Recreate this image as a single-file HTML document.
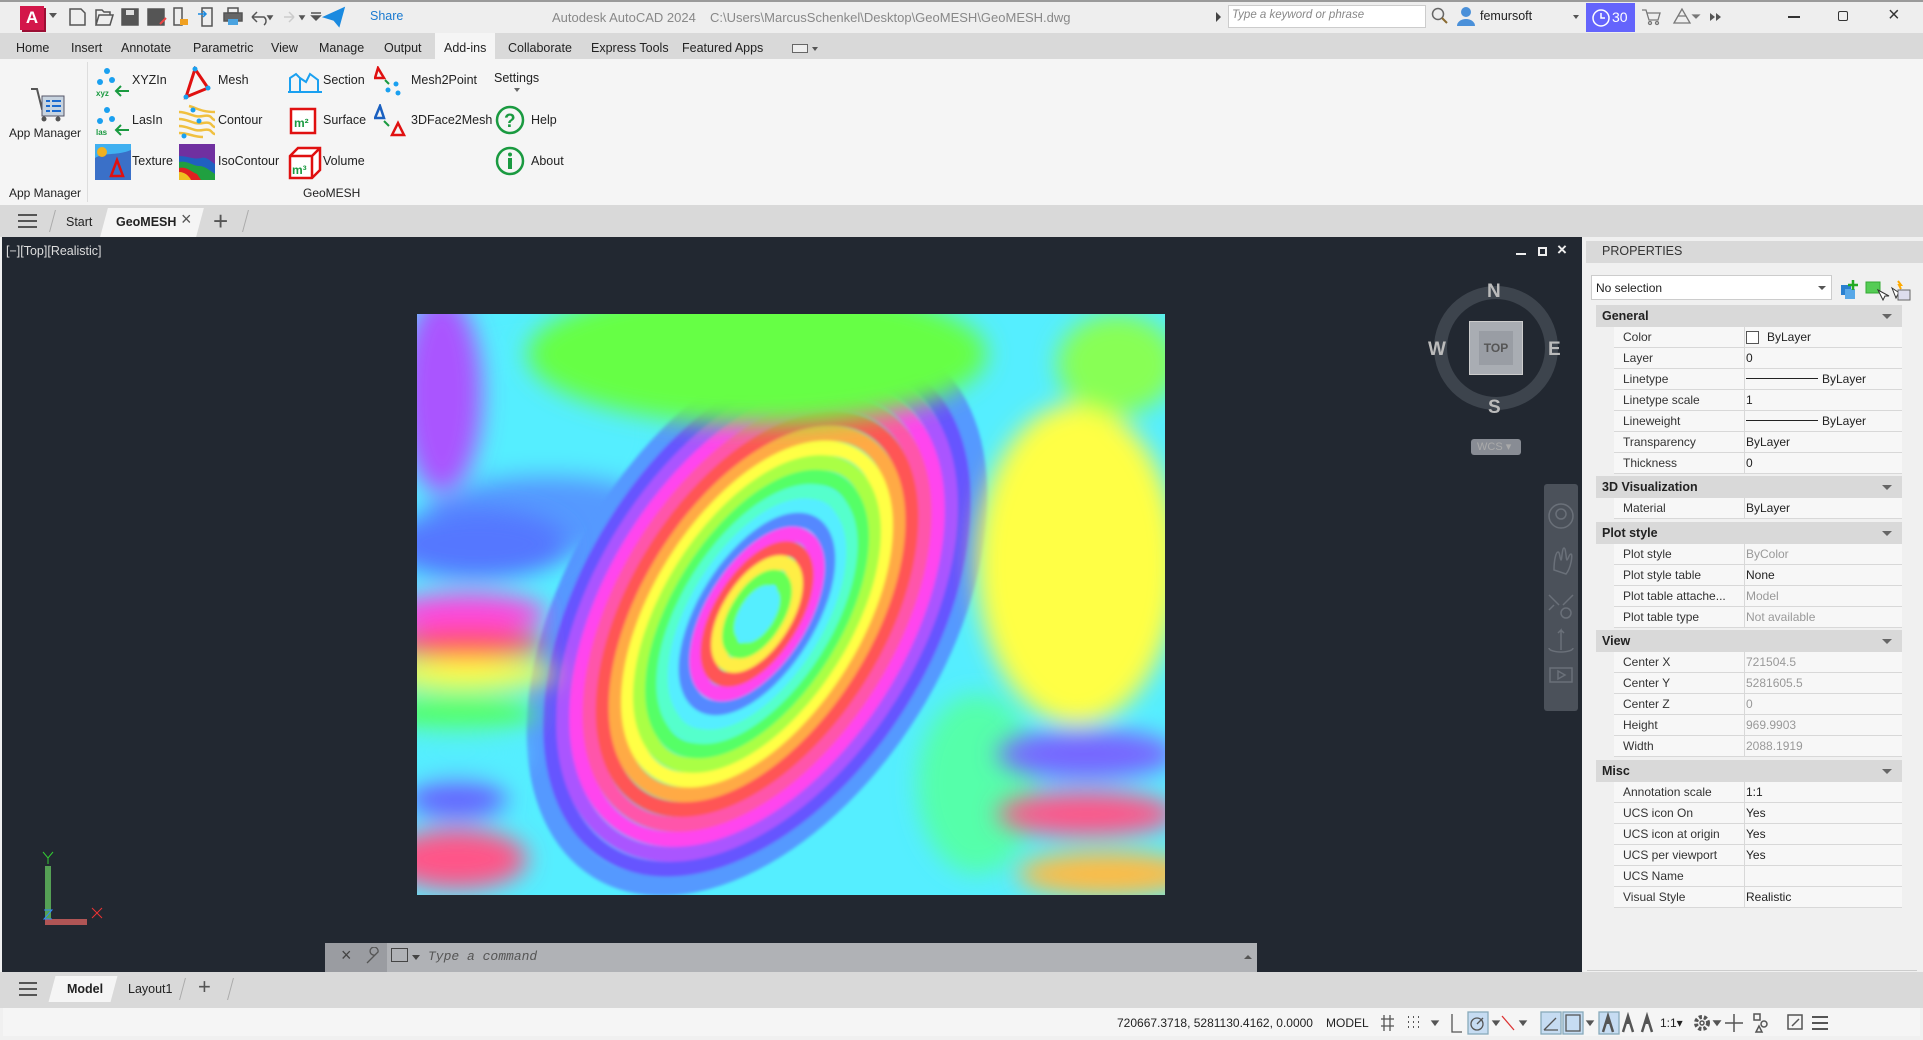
<!DOCTYPE html>
<html><head><meta charset="utf-8"><style>
*{margin:0;padding:0;box-sizing:border-box}
html,body{overflow:hidden}
body{width:1923px;height:1040px;background:#f0f0f0;font-family:"Liberation Sans",Arial,sans-serif;font-size:12px;color:#222;position:relative}
.a{position:absolute;white-space:nowrap}
.tab{position:absolute;top:41px;font-size:12.5px;color:#222}
.rt{position:absolute;font-size:12.5px;color:#222}
.row{position:absolute;left:1614px;width:288px;height:21px;border-bottom:1px solid #d8d8d8;background:#f7f7f7}
.row .l{position:absolute;left:9px;top:3px;color:#333}
.row .v{position:absolute;left:132px;top:3px;color:#222}
.row .sep{position:absolute;left:130px;top:0;width:1px;height:21px;background:#d8d8d8}
.hd{position:absolute;left:1596px;width:306px;height:22px;background:#d9d9d9;font-weight:bold;font-size:12.5px;padding:4px 0 0 6px}
.hd:after{content:"";position:absolute;right:10px;top:9px;border:5px solid transparent;border-top:5px solid #666}
.gr{color:#999!important}
.ico{position:absolute}
</style></head><body>
<div class="a" style="left:0;top:0;width:1923px;height:2px;background:#9a9a9a"></div>
<div class="a" style="left:0;top:2px;width:1923px;height:31px;background:#eeeeee"></div>
<div class="a" style="left:20px;top:6px;width:24px;height:24px;background:#d3174a;color:#fff;font-weight:bold;font-size:17px;text-align:center;line-height:24px;box-shadow:2px 2px 0 #9b0e33">A</div>
<div class="a" style="left:49px;top:13px;border:4px solid transparent;border-top:5px solid #555"></div>
<svg class="a" style="left:68px;top:6px" width="300" height="22" viewBox="0 0 300 22" fill="none" stroke="#555" stroke-width="1.5">
<path d="M2 3h11l4 4v12H2z"/><path d="M28 19l3-10h14l-3 10H28zM28 19V4h6l2 2h6v3"/>
<rect x="54" y="3" width="16" height="16" fill="#555"/><rect x="58" y="4" width="8" height="5" fill="#ddd" stroke="none"/>
<rect x="80" y="3" width="16" height="16" fill="#555"/><path d="M92 18l6-6" stroke="#e44" stroke-width="2"/>
<path d="M106 2h8v17h-8z"/><rect x="112" y="13" width="8" height="6" fill="#f0a020" stroke="none"/>
<path d="M134 2h10v18h-10z"/><path d="M130 8h8M135 5l3 3-3 3" stroke="#1a8ae0"/>
<rect x="156" y="7" width="18" height="8" fill="#666"/><rect x="160" y="2" width="10" height="5"/><rect x="160" y="13" width="10" height="6" fill="#4aa3e0" stroke="none"/>
<path d="M184 11h12a5 5 0 0 1 0 8M184 11l5-5M184 11l5 5"/><path d="M200 10l4 0 -2 3z" fill="#555"/>
<path d="M226 11h-10M226 11l-5-5M226 11l-5 5" stroke="#ccc"/><path d="M232 10l4 0-2 3z" fill="#555"/>
<path d="M243 7h10M244 10l4 4 4-4z" fill="#555"/>
<path d="M280 11l20-9-5 18-5-6z" fill="#1a8ae0" stroke="#1a8ae0" transform="translate(-24 0)"/></svg>
<div class="a" style="left:370px;top:9px;color:#1a7ad0;font-size:12.5px">Share</div>
<div class="a" style="left:552px;top:10px;color:#888;font-size:13px">Autodesk AutoCAD 2024</div>
<div class="a" style="left:710px;top:10px;color:#888;font-size:13px">C:\Users\MarcusSchenkel\Desktop\GeoMESH\GeoMESH.dwg</div>
<div class="a" style="left:1216px;top:12px;border:5px solid transparent;border-left:5px solid #444"></div>
<div class="a" style="left:1228px;top:5px;width:198px;height:23px;background:#fff;border:1px solid #ccc;color:#888;font-style:italic;padding:3px 3px;font-size:11.5px">Type a keyword or phrase</div>
<svg class="a" style="left:1431px;top:7px" width="18" height="18"><circle cx="7" cy="7" r="5.5" fill="none" stroke="#666" stroke-width="1.5"/><path d="M11 11l5 5" stroke="#8a6a30" stroke-width="2"/></svg>
<svg class="a" style="left:1456px;top:6px" width="20" height="20"><circle cx="10" cy="6" r="5" fill="#4a90d9"/><path d="M1 20a9 7 0 0 1 18 0z" fill="#4a90d9"/></svg>
<div class="a" style="left:1480px;top:9px;font-size:12.5px">femursoft</div>
<div class="a" style="left:1573px;top:15px;border:3px solid transparent;border-top:4px solid #555"></div>
<div class="a" style="left:1586px;top:3px;width:49px;height:29px;background:#6464fc;color:#fff;font-size:14px;padding:6px 0 0 26px">30</div>
<svg class="a" style="left:1591px;top:8px" width="20" height="20"><circle cx="10" cy="10" r="8" fill="none" stroke="#fff" stroke-width="1.5"/><path d="M10 5v5h4" stroke="#fff" fill="none" stroke-width="1.5"/></svg>
<svg class="a" style="left:1640px;top:6px" width="90" height="22" fill="none" stroke="#777" stroke-width="1.3"><path d="M2 4h4l3 10h9l2-7H7"/><circle cx="10" cy="17" r="1.5"/><circle cx="17" cy="17" r="1.5"/><path d="M42 3l-8 14h16z M38 10h8"/><path d="M53 9h6l-3 3z" fill="#777"/><path d="M70 7l5 4-5 4zM76 7l5 4-5 4z" fill="#555" stroke="none"/></svg>
<div class="a" style="left:1788px;top:16px;width:12px;height:1.5px;background:#333"></div>
<div class="a" style="left:1838px;top:11px;width:10px;height:10px;border:1.5px solid #333;border-radius:2px"></div>
<div class="a" style="left:1888px;top:4px;font-size:20px;color:#333">×</div>

<div class="a" style="left:0;top:33px;width:1923px;height:26px;background:#d9d9d9"></div>
<div class="a" style="left:435px;top:33px;width:60px;height:26px;background:#f5f5f5"></div>
<div class="tab" style="left:16px">Home</div><div class="tab" style="left:71px">Insert</div><div class="tab" style="left:121px">Annotate</div><div class="tab" style="left:193px">Parametric</div><div class="tab" style="left:271px">View</div><div class="tab" style="left:319px">Manage</div><div class="tab" style="left:384px">Output</div><div class="tab" style="left:444px">Add-ins</div><div class="tab" style="left:508px">Collaborate</div><div class="tab" style="left:591px">Express Tools</div><div class="tab" style="left:682px">Featured Apps</div>
<div class="a" style="left:792px;top:44px;width:16px;height:9px;border:1px solid #666;background:#eee"></div><div class="a" style="left:812px;top:47px;border:3px solid transparent;border-top:4px solid #555"></div>

<div class="a" style="left:0;top:59px;width:1923px;height:146px;background:#f5f5f5"></div>
<div class="a" style="left:87px;top:62px;width:1px;height:140px;background:#ddd"></div>
<svg class="ico" style="left:28px;top:86px" width="40" height="38"><path d="M3 3h6l5 20h18" stroke="#555" stroke-width="2" fill="none"/><rect x="14" y="10" width="22" height="20" fill="#c8d4e0" stroke="#556"/><path d="M18 15h4M24 15h9M18 20h4M24 20h9M18 25h4M24 25h9" stroke="#1a6ad0" stroke-width="2"/><circle cx="16" cy="33" r="2.5" fill="#555"/><circle cx="30" cy="33" r="2.5" fill="#555"/></svg>
<div class="rt" style="left:9px;top:126px;font-size:12px">App Manager</div>
<div class="rt" style="left:9px;top:186px;font-size:12px">App Manager</div>
<svg class="ico" style="left:95px;top:67px" width="36" height="32"><circle cx="12" cy="4" r="3" fill="#1aa0f0"/><circle cx="5" cy="15" r="3" fill="#1aa0f0"/><circle cx="17" cy="13" r="3" fill="#1aa0f0"/><text x="1" y="29" font-size="8" fill="#1a9a40" font-weight="bold" font-family="Liberation Sans">xyz</text><path d="M34 24H21M26 19l-5 5 5 5" stroke="#1a9a40" stroke-width="2" fill="none"/></svg>
<div class="rt" style="left:132px;top:73px">XYZIn</div>
<svg class="ico" style="left:181px;top:66px" width="34" height="34"><path d="M14 3L5 31l22-9z" fill="none" stroke="#e01010" stroke-width="3"/><circle cx="14" cy="3" r="2.5" fill="#1aa0f0"/><circle cx="5" cy="31" r="2.5" fill="#1aa0f0"/><circle cx="27" cy="22" r="2.5" fill="#1aa0f0"/></svg>
<div class="rt" style="left:218px;top:73px">Mesh</div>
<svg class="ico" style="left:286px;top:70px" width="36" height="24"><path d="M2 22h34M4 22V8l6-4 4 4v14M14 8l6 4 4-8 8 6v12" stroke="#1aa0f0" stroke-width="2" fill="none"/></svg>
<div class="rt" style="left:323px;top:73px">Section</div>
<svg class="ico" style="left:374px;top:66px" width="34" height="34"><path d="M4 2L1 12h9z" fill="none" stroke="#e01010" stroke-width="2.5"/><path d="M11 14l4 4" stroke="#1a9a40" stroke-width="2"/><circle cx="14" cy="24" r="2.5" fill="#1aa0f0"/><circle cx="22" cy="18" r="2.5" fill="#1aa0f0"/><circle cx="24" cy="27" r="2.5" fill="#1aa0f0"/></svg>
<div class="rt" style="left:411px;top:73px">Mesh2Point</div>
<div class="rt" style="left:494px;top:71px">Settings</div><div class="a" style="left:514px;top:88px;border:3px solid transparent;border-top:4px solid #666"></div>
<svg class="ico" style="left:95px;top:106px" width="36" height="32"><circle cx="12" cy="4" r="3" fill="#1aa0f0"/><circle cx="5" cy="15" r="3" fill="#1aa0f0"/><circle cx="17" cy="13" r="3" fill="#1aa0f0"/><text x="1" y="29" font-size="8" fill="#1a9a40" font-weight="bold" font-family="Liberation Sans">las</text><path d="M34 24H21M26 19l-5 5 5 5" stroke="#1a9a40" stroke-width="2" fill="none"/></svg>
<div class="rt" style="left:132px;top:113px">LasIn</div>
<svg class="ico" style="left:179px;top:104px" width="36" height="36"><path d="M0 8c10 0 14 6 24 4s8 4 12 4M0 15c10 0 14 6 24 4s8 4 12 4M0 22c10 0 14 6 24 4s8 4 12 4M0 29c10 0 14 4 24 4M10 2c8 2 12 6 26 6" stroke="#f0c040" stroke-width="2.5" fill="none"/><circle cx="14" cy="6" r="2.5" fill="#1aa0f0"/><circle cx="20" cy="17" r="2.5" fill="#1aa0f0"/><circle cx="5" cy="32" r="2.5" fill="#1aa0f0"/></svg>
<div class="rt" style="left:218px;top:113px">Contour</div>
<svg class="ico" style="left:289px;top:107px" width="28" height="28"><rect x="2" y="2" width="24" height="24" fill="#fff" stroke="#e01010" stroke-width="2.5"/><text x="5" y="20" font-size="12" font-weight="bold" fill="#1a9a40" font-family="Liberation Sans">m²</text></svg>
<div class="rt" style="left:323px;top:113px">Surface</div>
<svg class="ico" style="left:374px;top:104px" width="34" height="34"><path d="M6 2L1 14h9z" fill="none" stroke="#1a60c0" stroke-width="2.5"/><path d="M10 17l5 5" stroke="#1a9a40" stroke-width="2"/><path d="M24 19L18 31h12z" fill="none" stroke="#e01010" stroke-width="2.5"/></svg>
<div class="rt" style="left:411px;top:113px">3DFace2Mesh</div>
<svg class="ico" style="left:495px;top:105px" width="30" height="30"><circle cx="15" cy="15" r="13" fill="none" stroke="#1a9a40" stroke-width="2.5"/><text x="9" y="22" font-size="19" font-weight="bold" fill="#1a9a40" font-family="Liberation Sans">?</text></svg>
<div class="rt" style="left:531px;top:113px">Help</div>
<svg class="ico" style="left:95px;top:144px" width="36" height="36"><rect width="36" height="36" fill="#3a70c8"/><path d="M0 14c10-6 22-2 36-8V0H0z" fill="#40b0f0"/><circle cx="7" cy="8" r="5" fill="#f0b020"/><path d="M22 16l-6 16h12z" fill="none" stroke="#e01010" stroke-width="2.5"/></svg>
<div class="rt" style="left:132px;top:154px">Texture</div>
<svg class="ico" style="left:179px;top:144px" width="36" height="36"><rect width="36" height="36" fill="#7030a0"/><path d="M0 12c8 0 16 4 22 2s10 4 14 6v16H0z" fill="#2060c0"/><path d="M0 18c8-2 14 4 20 4s10 4 16 8v6H0z" fill="#20a040"/><path d="M0 24c8-2 12 4 18 6l4 6H0z" fill="#e02020"/><path d="M0 28c6 0 10 4 12 8H0z" fill="#f0c020"/></svg>
<div class="rt" style="left:218px;top:154px">IsoContour</div>
<svg class="ico" style="left:288px;top:144px" width="34" height="36"><path d="M2 12l8-8h22v22l-8 8H2z M2 12h22v22 M24 12l8-8" fill="#fff" stroke="#e01010" stroke-width="2.5"/><text x="4" y="30" font-size="12" font-weight="bold" fill="#1a9a40" font-family="Liberation Sans">m³</text></svg>
<div class="rt" style="left:323px;top:154px">Volume</div>
<svg class="ico" style="left:495px;top:146px" width="30" height="30"><circle cx="15" cy="15" r="13" fill="none" stroke="#1a9a40" stroke-width="2.5"/><circle cx="15" cy="8.5" r="2" fill="#1a9a40"/><rect x="13" y="12" width="4" height="11" fill="#1a9a40"/></svg>
<div class="rt" style="left:531px;top:154px">About</div>
<div class="rt" style="left:303px;top:186px;font-size:12px">GeoMESH</div>

<div class="a" style="left:0;top:205px;width:1923px;height:32px;background:#d9d9d9"></div>
<div class="a" style="left:18px;top:214px;width:19px;height:2px;background:#555;box-shadow:0 6px 0 #555,0 12px 0 #555"></div>
<div class="a" style="left:52px;top:210px;width:1px;height:22px;background:#aaa;transform:skewX(-15deg)"></div>
<div class="rt" style="left:66px;top:215px">Start</div>
<div class="a" style="left:104px;top:208px;width:96px;height:29px;background:#f5f5f5;transform:skewX(-15deg)"></div>
<div class="rt" style="left:116px;top:215px;font-weight:bold">GeoMESH</div>
<div class="a" style="left:181px;top:209px;font-size:18px;color:#555">×</div>
<div class="a" style="left:213px;top:206px;font-size:26px;color:#555;font-weight:300">+</div>
<div class="a" style="left:245px;top:210px;width:1px;height:22px;background:#aaa;transform:skewX(-15deg)"></div>

<div class="a" style="left:2px;top:237px;width:1580px;height:735px;background:#222831"></div>
<div class="a" style="left:6px;top:244px;color:#ddd;font-size:12.5px">[−][Top][Realistic]</div>
<div class="a" style="left:1516px;top:253px;width:10px;height:2px;background:#eee"></div>
<div class="a" style="left:1538px;top:247px;width:9px;height:9px;border:2px solid #eee"></div>
<div class="a" style="left:1557px;top:240px;font-size:17px;color:#eee;font-weight:bold">×</div>
<svg class="a" style="left:417px;top:314px;overflow:hidden" width="748" height="581" viewBox="0 0 748 581">
<defs><filter id="b" x="-20%" y="-20%" width="140%" height="140%"><feGaussianBlur stdDeviation="12"/></filter>
<filter id="c"><feGaussianBlur stdDeviation="1.5"/></filter></defs>
<rect width="748" height="581" fill="#55eeff"/>
<g filter="url(#b)">
<ellipse cx="120" cy="120" rx="120" ry="90" fill="#55eeff"/>
<ellipse cx="130" cy="200" rx="120" ry="40" fill="#5599ff"/>
<ellipse cx="560" cy="470" rx="60" ry="90" fill="#55ffaa"/>
</g>
<g transform="translate(340 300) rotate(-58)" fill="none" stroke-width="15" filter="url(#c)">
<ellipse rx="300" ry="180" stroke="#5599ff" stroke-width="20"/>
<ellipse rx="282" ry="168" stroke="#6655ff"/>
<ellipse rx="266" ry="156" stroke="#aa55ff"/>
<ellipse rx="250" ry="144" stroke="#ff44ee"/>
<ellipse rx="234" ry="132" stroke="#ff55aa"/>
<ellipse rx="218" ry="120" stroke="#ff5555"/>
<ellipse rx="202" ry="108" stroke="#ffaa44"/>
<ellipse rx="186" ry="97" stroke="#ffff44"/>
<ellipse rx="170" ry="87" stroke="#aaff44"/>
<ellipse rx="154" ry="77" stroke="#55ff66"/>
<ellipse rx="138" ry="68" stroke="#55ffcc"/>
<ellipse rx="122" ry="59" stroke="#55eeff"/>
<ellipse rx="106" ry="51" stroke="#5588ff"/>
<ellipse rx="90" ry="43" stroke="#ff44ee"/>
<ellipse rx="74" ry="35" stroke="#ff5555"/>
<ellipse rx="58" ry="27" stroke="#ffee44"/>
<ellipse rx="42" ry="19" stroke="#66ff55"/>
<ellipse rx="24" ry="10" stroke="#55eeff" fill="#55eeff"/>
</g>
<g filter="url(#b)">
<ellipse cx="340" cy="40" rx="230" ry="70" fill="#66ff44"/>
<ellipse cx="660" cy="250" rx="100" ry="160" fill="#ffff44"/>
<ellipse cx="700" cy="50" rx="60" ry="50" fill="#88ff55"/>
<ellipse cx="25" cy="80" rx="40" ry="100" fill="#aa55ff"/>
<ellipse cx="60" cy="230" rx="90" ry="35" fill="#5577ff"/>
<ellipse cx="50" cy="300" rx="80" ry="20" fill="#ff44dd"/>
<ellipse cx="50" cy="330" rx="80" ry="15" fill="#ff5555"/>
<ellipse cx="50" cy="360" rx="90" ry="15" fill="#ffff44"/>
<ellipse cx="40" cy="400" rx="80" ry="18" fill="#55ff66"/>
<ellipse cx="40" cy="440" rx="70" ry="20" fill="#55eeff"/>
<ellipse cx="40" cy="485" rx="50" ry="20" fill="#6666ff"/>
<ellipse cx="40" cy="545" rx="70" ry="30" fill="#ff5588"/>
<ellipse cx="670" cy="440" rx="90" ry="25" fill="#7766ff"/>
<ellipse cx="670" cy="500" rx="90" ry="22" fill="#ff5588"/>
<ellipse cx="690" cy="560" rx="90" ry="22" fill="#ffbb44"/>
</g></svg>
<div class="a" style="left:1434px;top:286px;width:124px;height:124px;border-radius:50%;border:13px solid #3d444d"></div>
<div class="a" style="left:1469px;top:321px;width:54px;height:54px;background:#a9adb3;border:1px solid #ccc"></div>
<div class="a" style="left:1479px;top:331px;width:34px;height:34px;background:#999da4;color:#555;font-size:12px;font-weight:bold;text-align:center;line-height:34px">TOP</div>
<div class="a" style="left:1487px;top:281px;color:#bbb;font-weight:bold;font-size:19px">N</div>
<div class="a" style="left:1488px;top:397px;color:#bbb;font-weight:bold;font-size:19px">S</div>
<div class="a" style="left:1428px;top:339px;color:#bbb;font-weight:bold;font-size:19px">W</div>
<div class="a" style="left:1548px;top:339px;color:#bbb;font-weight:bold;font-size:19px">E</div>
<div class="a" style="left:1471px;top:439px;width:50px;height:16px;background:#888c94;border-radius:3px;color:#aaa;font-size:11px;padding:1px 0 0 6px">WCS ▾</div>
<div class="a" style="left:1544px;top:484px;width:34px;height:227px;background:#4b515a;border-radius:3px"></div>
<svg class="a" style="left:1546px;top:500px" width="30" height="200" fill="none" stroke="#6a7079" stroke-width="1.5"><circle cx="15" cy="16" r="12"/><circle cx="15" cy="14" r="5"/><path d="M8 70c0-10 2-18 4-18s2 8 3 8 1-12 3-12 2 12 3 12 2-6 4-6 0 14-5 20z"/><path d="M3 95l10 10M27 95l-10 10M3 110l5-5"/><circle cx="20" cy="113" r="5"/><path d="M15 150v-20l-3 3M15 130l3 3M3 148a12 4 0 0 0 24 0"/><rect x="4" y="168" width="22" height="14"/><path d="M12 171l7 4-7 4z"/></svg>
<svg class="a" style="left:40px;top:848px" width="80" height="80"><path d="M3 4l5 6 5-6M8 10v6" stroke="#3c3" fill="none"/><rect x="5" y="18" width="6" height="53" fill="#55a055"/><rect x="5" y="71" width="42" height="6" fill="#b05555"/><path d="M52 60l10 10M62 60l-10 10" stroke="#e33"/><path d="M4 62h8l-8 9h8" stroke="#3388ff" fill="none"/></svg>
<div class="a" style="left:325px;top:943px;width:932px;height:29px;background:#b0b2b6"></div>
<div class="a" style="left:325px;top:943px;width:62px;height:29px;background:#9a9ca1"></div>
<div class="a" style="left:341px;top:945px;font-size:18px;color:#444">×</div>
<svg class="a" style="left:364px;top:947px" width="18" height="18"><path d="M3 16l8-8a4 4 0 1 1 3-3l-8 8z" fill="none" stroke="#555" stroke-width="1.3"/></svg>
<div class="a" style="left:391px;top:948px;width:17px;height:14px;border:1.5px solid #444"></div>
<div class="a" style="left:412px;top:955px;border:4px solid transparent;border-top:5px solid #444"></div>
<div class="a" style="left:428px;top:949px;font-family:'Liberation Mono',monospace;font-style:italic;color:#555;font-size:13px">Type a command</div>
<div class="a" style="left:1244px;top:951px;border:4px solid transparent;border-bottom:4px solid #555"></div>

<div class="a" style="left:1582px;top:237px;width:341px;height:735px;background:#f0f0f0"></div>
<div class="a" style="left:1586px;top:241px;width:337px;height:22px;background:#d9d9d9"></div>
<div class="a" style="left:1602px;top:244px;font-size:12.5px;color:#333">PROPERTIES</div>
<div class="a" style="left:1591px;top:275px;width:241px;height:25px;background:#fff;border:1px solid #ccc;padding:5px 4px;font-size:12px">No selection</div>
<div class="a" style="left:1818px;top:286px;border:4px solid transparent;border-top:4px solid #555"></div>
<svg class="a" style="left:1840px;top:278px" width="74" height="24"><rect x="1" y="7" width="10" height="10" fill="#2a80d0"/><rect x="5" y="11" width="10" height="10" fill="#58a8e8"/><path d="M13 2v10M8 7h10" stroke="#2a2" stroke-width="2.5"/><rect x="26" y="4" width="14" height="11" fill="#5c5" stroke="#3a3"/><path d="M38 12l5 10 2-4 4 0z" fill="#fff" stroke="#333"/><path d="M52 10l4 10 2-4 3 0z" fill="#fff" stroke="#333"/><rect x="58" y="12" width="12" height="10" fill="#dde" stroke="#666"/><path d="M58 3l3 4h-2l2 4" stroke="#fa0" fill="none" stroke-width="2"/></svg>

<div class="hd" style="top:305px">General</div>
<div class="row" style="top:327px"><div class="l">Color</div><div class="sep"></div><div class="v"><span style="display:inline-block;width:13px;height:13px;border:1px solid #555;background:#fff;vertical-align:-3px;margin-right:8px"></span>ByLayer</div></div>
<div class="row" style="top:348px"><div class="l">Layer</div><div class="sep"></div><div class="v">0</div></div>
<div class="row" style="top:369px"><div class="l">Linetype</div><div class="sep"></div><div class="v"><span style="display:inline-block;width:72px;height:1px;background:#222;vertical-align:4px;margin-right:4px"></span>ByLayer</div></div>
<div class="row" style="top:390px"><div class="l">Linetype scale</div><div class="sep"></div><div class="v">1</div></div>
<div class="row" style="top:411px"><div class="l">Lineweight</div><div class="sep"></div><div class="v"><span style="display:inline-block;width:72px;height:1px;background:#222;vertical-align:4px;margin-right:4px"></span>ByLayer</div></div>
<div class="row" style="top:432px"><div class="l">Transparency</div><div class="sep"></div><div class="v">ByLayer</div></div>
<div class="row" style="top:453px"><div class="l">Thickness</div><div class="sep"></div><div class="v">0</div></div>
<div class="hd" style="top:476px">3D Visualization</div>
<div class="row" style="top:498px"><div class="l">Material</div><div class="sep"></div><div class="v">ByLayer</div></div>
<div class="hd" style="top:522px">Plot style</div>
<div class="row" style="top:544px"><div class="l">Plot style</div><div class="sep"></div><div class="v gr">ByColor</div></div>
<div class="row" style="top:565px"><div class="l">Plot style table</div><div class="sep"></div><div class="v">None</div></div>
<div class="row" style="top:586px"><div class="l">Plot table attache...</div><div class="sep"></div><div class="v gr">Model</div></div>
<div class="row" style="top:607px"><div class="l">Plot table type</div><div class="sep"></div><div class="v gr">Not available</div></div>
<div class="hd" style="top:630px">View</div>
<div class="row" style="top:652px"><div class="l">Center X</div><div class="sep"></div><div class="v gr">721504.5</div></div>
<div class="row" style="top:673px"><div class="l">Center Y</div><div class="sep"></div><div class="v gr">5281605.5</div></div>
<div class="row" style="top:694px"><div class="l">Center Z</div><div class="sep"></div><div class="v gr">0</div></div>
<div class="row" style="top:715px"><div class="l">Height</div><div class="sep"></div><div class="v gr">969.9903</div></div>
<div class="row" style="top:736px"><div class="l">Width</div><div class="sep"></div><div class="v gr">2088.1919</div></div>
<div class="hd" style="top:760px">Misc</div>
<div class="row" style="top:782px"><div class="l">Annotation scale</div><div class="sep"></div><div class="v">1:1</div></div>
<div class="row" style="top:803px"><div class="l">UCS icon On</div><div class="sep"></div><div class="v">Yes</div></div>
<div class="row" style="top:824px"><div class="l">UCS icon at origin</div><div class="sep"></div><div class="v">Yes</div></div>
<div class="row" style="top:845px"><div class="l">UCS per viewport</div><div class="sep"></div><div class="v">Yes</div></div>
<div class="row" style="top:866px"><div class="l">UCS Name</div><div class="sep"></div><div class="v"></div></div>
<div class="row" style="top:887px"><div class="l">Visual Style</div><div class="sep"></div><div class="v">Realistic</div></div>
<div class="a" style="left:1587px;top:970px;width:330px;height:1px;background:#ccc"></div>

<div class="a" style="left:0;top:972px;width:1923px;height:36px;background:#d9d9d9"></div>
<div class="a" style="left:19px;top:982px;width:18px;height:2px;background:#555;box-shadow:0 6px 0 #555,0 12px 0 #555"></div>
<div class="a" style="left:52px;top:976px;width:62px;height:26px;background:#f5f5f5;transform:skewX(-15deg)"></div>
<div class="rt" style="left:67px;top:982px;font-weight:bold">Model</div>
<div class="rt" style="left:128px;top:982px">Layout1</div>
<div class="a" style="left:182px;top:978px;width:1px;height:22px;background:#aaa;transform:skewX(-15deg)"></div>
<div class="a" style="left:198px;top:974px;font-size:22px;line-height:26px;color:#555">+</div>
<div class="a" style="left:230px;top:978px;width:1px;height:22px;background:#aaa;transform:skewX(-15deg)"></div>
<div class="a" style="left:3px;top:1008px;width:1917px;height:28px;background:#f5f5f5"></div>
<div class="a" style="left:1117px;top:1016px;font-size:12px;line-height:14px">720667.3718, 5281130.4162, 0.0000</div>
<div class="a" style="left:1326px;top:1016px;font-size:12px;line-height:14px">MODEL</div>
<svg class="a" style="left:1380px;top:1010px" width="540" height="26" fill="none" stroke="#555" stroke-width="1.3">
<path d="M4 5v16M10 5v16M1 9h13M1 16h13"/><path d="M28 7h1M33 7h1M38 7h1M28 12h1M33 12h1M38 12h1M28 17h1M33 17h1M38 17h1" stroke-width="2"/><path d="M52 11l3 4 3-4z" fill="#555"/>
<path d="M72 4v18h10"/>
<rect x="88" y="2" width="20" height="22" fill="#c6dcf2" stroke="#8ab"/><circle cx="97" cy="14" r="6"/><path d="M97 14l6-6"/><path d="M113 11l3 4 3-4zM140 11l3 4 3-4z" fill="#555"/><path d="M122 6l12 14" stroke="#d33"/>
<rect x="161" y="2" width="20" height="22" fill="#c6dcf2" stroke="#8ab"/><path d="M164 20l12-12M164 20h14"/><rect x="183" y="2" width="20" height="22" fill="#c6dcf2" stroke="#8ab"/><rect x="186" y="5" width="14" height="16"/><path d="M207 11l3 4 3-4z" fill="#555"/>
<rect x="219" y="2" width="20" height="22" fill="#c6dcf2" stroke="#8ab"/><path d="M223 22l5-16 5 16M228 6v8" stroke-width="2.5"/><path d="M243 22l5-16 5 16M248 6v8M262 22l5-16 5 16M267 6v8" stroke-width="2.5"/></svg>
<div class="a" style="left:1660px;top:1016px;font-size:12px;line-height:14px">1:1▾</div>
<svg class="a" style="left:1690px;top:1010px" width="230" height="26" fill="none" stroke="#555" stroke-width="1.5"><circle cx="12" cy="13" r="6" stroke-width="4" stroke-dasharray="3 2"/><circle cx="12" cy="13" r="2"/><path d="M24 11l3 4 3-4z" fill="#555"/><path d="M44 4v18M35 13h18"/><rect x="64" y="4" width="6" height="6"/><circle cx="74" cy="14" r="3"/><path d="M66 22l3-6 3 6z"/><rect x="98" y="5" width="14" height="14"/><path d="M102 16l7-7"/><path d="M122 7h16M122 13h16M122 19h16" stroke-width="2"/></svg>
</body></html>
